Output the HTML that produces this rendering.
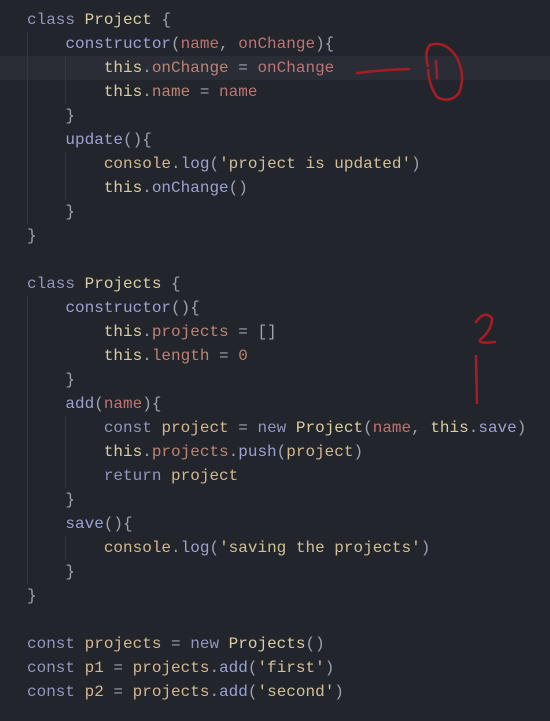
<!DOCTYPE html>
<html><head><style>
body{margin:0;background:#22252c;width:550px;height:721px;overflow:hidden;position:relative}
pre{margin:0;position:absolute;left:27px;top:8px;font:16px/24px "Liberation Mono",monospace;color:#9ea2ae;white-space:pre}
.k{color:#9096bc}.t{color:#d9cda2}.f{color:#9ca1d2}.p{color:#bf7474}.h{color:#d9cda2}.r{color:#bd8373}.v{color:#d2b88e}.s{color:#cfc097}
.hl{position:absolute;left:0;top:56px;width:550px;height:24px;background:#2a2d35}
.g{position:absolute;width:1px;background:#343842}
</style></head><body>
<div class="hl"></div>
<div class="g" style="left:27px;top:32px;height:192px"></div>
<div class="g" style="left:65px;top:56px;height:48px"></div>
<div class="g" style="left:65px;top:152px;height:48px"></div>
<div class="g" style="left:27px;top:296px;height:288px"></div>
<div class="g" style="left:65px;top:416px;height:72px"></div>
<div class="g" style="left:65px;top:536px;height:24px"></div>
<pre><span class="k">class</span> <span class="t">Project</span> {
    <span class="f">constructor</span>(<span class="p">name</span>, <span class="p">onChange</span>){
        <span class="h">this</span>.<span class="r">onChange</span> = <span class="p">onChange</span>
        <span class="h">this</span>.<span class="r">name</span> = <span class="p">name</span>
    }
    <span class="f">update</span>(){
        <span class="v">console</span>.<span class="f">log</span>(<span class="s">'project is updated'</span>)
        <span class="h">this</span>.<span class="f">onChange</span>()
    }
}

<span class="k">class</span> <span class="t">Projects</span> {
    <span class="f">constructor</span>(){
        <span class="h">this</span>.<span class="r">projects</span> = []
        <span class="h">this</span>.<span class="r">length</span> = <span class="r">0</span>
    }
    <span class="f">add</span>(<span class="p">name</span>){
        <span class="k">const</span> <span class="v">project</span> = <span class="k">new</span> <span class="t">Project</span>(<span class="p">name</span>, <span class="h">this</span>.<span class="f">save</span>)
        <span class="h">this</span>.<span class="r">projects</span>.<span class="f">push</span>(<span class="v">project</span>)
        <span class="k">return</span> <span class="v">project</span>
    }
    <span class="f">save</span>(){
        <span class="v">console</span>.<span class="f">log</span>(<span class="s">'saving the projects'</span>)
    }
}

<span class="k">const</span> <span class="v">projects</span> = <span class="k">new</span> <span class="t">Projects</span>()
<span class="k">const</span> <span class="v">p1</span> = <span class="v">projects</span>.<span class="f">add</span>(<span class="s">'first'</span>)
<span class="k">const</span> <span class="v">p2</span> = <span class="v">projects</span>.<span class="f">add</span>(<span class="s">'second'</span>)</pre>
<svg style="position:absolute;left:0;top:0" width="550" height="721" fill="none" stroke="#a81c24" stroke-width="2.5" stroke-linecap="round">
<path d="M357 73 Q380 70 409 69"/>
<path d="M428 66 Q424 52 430 45 Q446 40 457 58 Q466 76 459 93 Q450 104 437 97 Q429 85 428 70"/>
<path d="M436 61 L437 78"/>
<path d="M476 322 Q484 310 492 318 Q492 330 480 340 Q478 344 495 342"/>
<path d="M476 356 L477 403"/>
</svg>
</body></html>
